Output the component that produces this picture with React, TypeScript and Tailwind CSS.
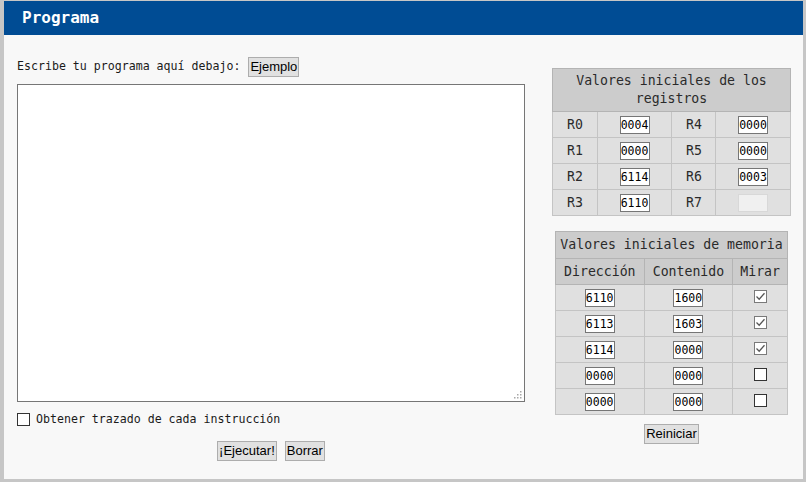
import React from 'react'

const mono = "font-['DejaVu_Sans_Mono',monospace]"
const btn =
  "h-[20px] px-[1px] bg-[#e1e1e1] border border-[#adadad] text-[13px] leading-[18px] text-black font-['Liberation_Sans',Arial,sans-serif]"

const registers: [string, string, string, string | null][] = [
  ['R0', '0004', 'R4', '0000'],
  ['R1', '0000', 'R5', '0000'],
  ['R2', '6114', 'R6', '0003'],
  ['R3', '6110', 'R7', null],
]

const memory: [string, string, boolean][] = [
  ['6110', '1600', true],
  ['6113', '1603', true],
  ['6114', '0000', true],
  ['0000', '0000', false],
  ['0000', '0000', false],
]

function Field({ value }: { value: string }) {
  return (
    <input
      readOnly
      value={value}
      className={`${mono} w-[30px] h-[18px] px-0 bg-white border border-[#767676] text-[11.5px] leading-[16px] text-black outline-none`}
    />
  )
}

function Check({ checked }: { checked: boolean }) {
  return (
    <span
      className={`inline-flex items-center justify-center w-[13px] h-[13px] bg-white border ${
        checked ? 'border-[#7a7a7a]' : 'border-[#333]'
      }`}
    >
      {checked && (
        <svg width="11" height="11" viewBox="0 0 11 11" fill="none">
          <path d="M1.5 5.5 L4.2 8.2 L9.5 2.2" stroke="#555" strokeWidth="1.3" />
        </svg>
      )}
    </span>
  )
}

export default function App() {
  return (
    <div className="w-[806px] h-[482px] bg-[#c6c6c6] pl-[4px] pt-[1px] pr-[3px] pb-[3px]">
      <div className="w-full h-full bg-[#f8f8f8] flex flex-col">
        <div className="h-[34px] bg-[#004c94] flex items-center pl-[18px]">
          <h1 className={`${mono} text-[16px] font-bold text-white`}>Programa</h1>
        </div>

        <div className={`${mono} flex text-[#1a1a1a]`}>
          {/* left: program editor */}
          <div className="ml-[13px] w-[508px] pt-[22px] flex flex-col">
            <div className="flex items-center gap-[8px] text-[11.6px]">
              <span>Escribe tu programa aquí debajo:</span>
              <button className={btn}>Ejemplo</button>
            </div>
            <div className="relative mt-[7px]">
              <textarea className="block w-[508px] h-[318px] bg-white border border-[#767676] resize-none outline-none" />
              <svg className="absolute right-[3px] bottom-[3px]" width="8" height="8" viewBox="0 0 8 8">
                <g fill="#a8a8a8">
                  <rect x="6" y="0" width="1.5" height="1.5" />
                  <rect x="3" y="3" width="1.5" height="1.5" />
                  <rect x="6" y="3" width="1.5" height="1.5" />
                  <rect x="0" y="6" width="1.5" height="1.5" />
                  <rect x="3" y="6" width="1.5" height="1.5" />
                  <rect x="6" y="6" width="1.5" height="1.5" />
                </g>
              </svg>
            </div>
            <label className="flex items-center gap-[6px] mt-[9px] text-[11.6px]">
              <Check checked={false} />
              <span>Obtener trazado de cada instrucción</span>
            </label>
            <div className="flex justify-center gap-[8px] mt-[13px]">
              <button className={btn}>¡Ejecutar!</button>
              <button className={btn}>Borrar</button>
            </div>
          </div>

          {/* right: initial values */}
          <div className="ml-[27px] w-[239px] pt-[33px] flex flex-col items-center">
            <table className="w-[239px] border-collapse text-[13.2px] text-[#2a2a2a]">
              <thead>
                <tr>
                  <th colSpan={4} className="h-[43px] bg-[#cccccc] border border-[#b4b4b4] font-normal leading-[18px] px-[20px]">
                    Valores iniciales de los registros
                  </th>
                </tr>
              </thead>
              <tbody>
                {registers.map(([a, va, b, vb]) => (
                  <tr key={a} className="h-[26px] bg-[#e0e0e0]">
                    <td className="w-[45px] border border-[#c4c4c4] text-center">{a}</td>
                    <td className="w-[75px] border border-[#c4c4c4] text-center align-middle">
                      <div className="flex justify-center"><Field value={va} /></div>
                    </td>
                    <td className="w-[44px] border border-[#c4c4c4] text-center">{b}</td>
                    <td className="w-[75px] border border-[#c4c4c4] text-center align-middle">
                      <div className="flex justify-center">
                        {vb === null ? (
                          <span className="w-[30px] h-[18px] bg-[#f0f0f0] border border-[#d8d8d8]" />
                        ) : (
                          <Field value={vb} />
                        )}
                      </div>
                    </td>
                  </tr>
                ))}
              </tbody>
            </table>

            <table className="mt-[15px] w-[233px] border-collapse text-[13.2px] text-[#2a2a2a]">
              <thead>
                <tr>
                  <th colSpan={3} className="h-[27px] bg-[#cccccc] border border-[#b4b4b4] font-normal">
                    Valores iniciales de memoria
                  </th>
                </tr>
                <tr>
                  <th className="w-[89px] h-[26px] bg-[#cccccc] border border-[#b4b4b4] font-normal">Dirección</th>
                  <th className="w-[89px] bg-[#cccccc] border border-[#b4b4b4] font-normal">Contenido</th>
                  <th className="w-[55px] bg-[#cccccc] border border-[#b4b4b4] font-normal">Mirar</th>
                </tr>
              </thead>
              <tbody>
                {memory.map(([addr, val, on], i) => (
                  <tr key={i} className="h-[26px] bg-[#e0e0e0]">
                    <td className="border border-[#c4c4c4]">
                      <div className="flex justify-center"><Field value={addr} /></div>
                    </td>
                    <td className="border border-[#c4c4c4]">
                      <div className="flex justify-center"><Field value={val} /></div>
                    </td>
                    <td className="border border-[#c4c4c4]">
                      <div className="flex justify-center pb-[3px]"><Check checked={on} /></div>
                    </td>
                  </tr>
                ))}
              </tbody>
            </table>

            <button className={`${btn} mt-[9px]`}>Reiniciar</button>
          </div>
        </div>
      </div>
    </div>
  )
}
